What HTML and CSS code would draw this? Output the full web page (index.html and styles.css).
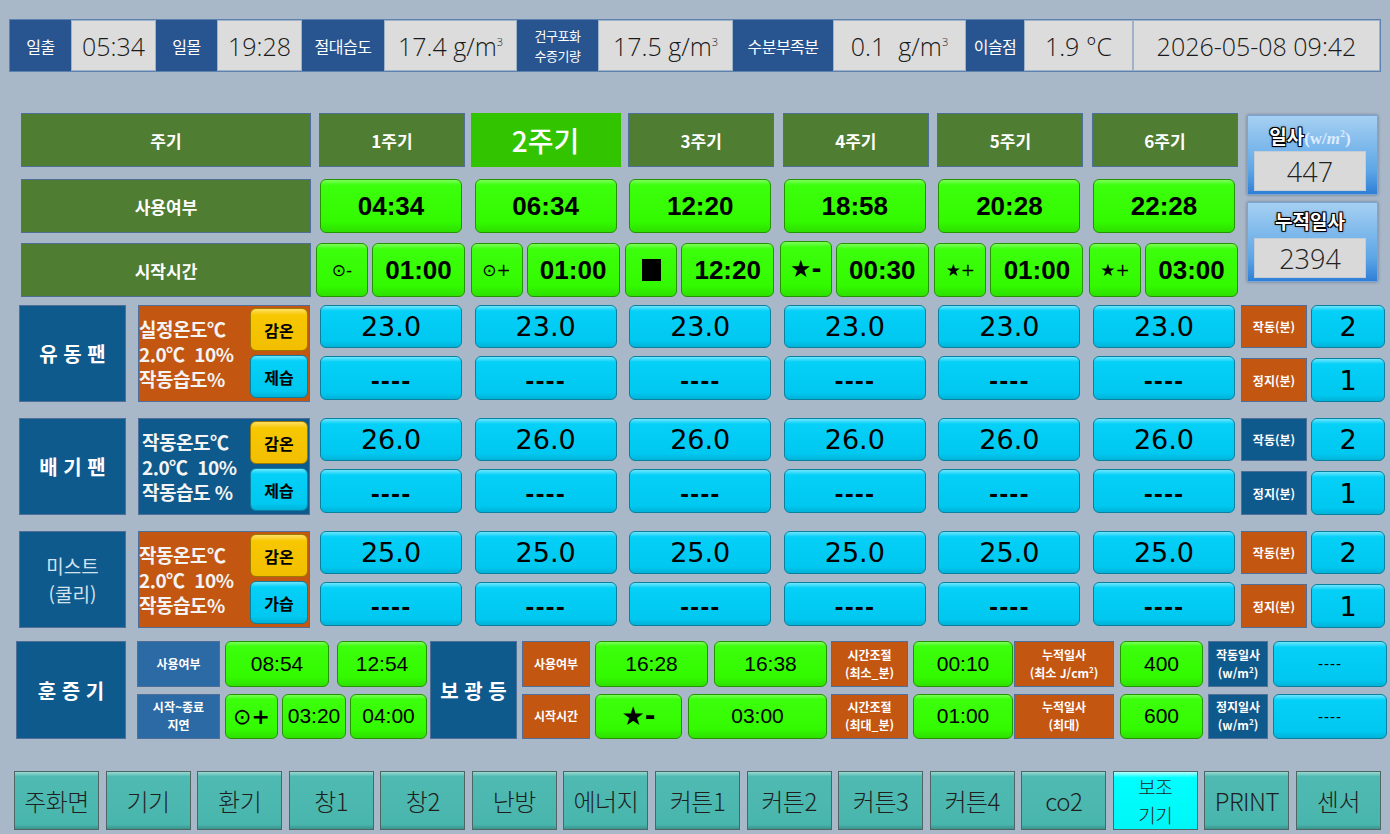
FILE: index.html
```html
<!DOCTYPE html>
<html lang="ko">
<head>
  <meta charset="UTF-8" />
  <title>보조기기</title>
  <link rel="stylesheet" href="styles.css">
</head>
<body>
  <div class="topbar">
    <div class="tlabel w61">일출</div>
    <div class="tval w85">05:34</div>
    <div class="tlabel w61">일몰</div>
    <div class="tval w85">19:28</div>
    <div class="tlabel w82">절대습도</div>
    <div class="tval w133"><span>17.4 g/m<sup>3</sup></span></div>
    <div class="tlabel w81 two"><span>건구포화<br>수증기량</span></div>
    <div class="tval w135"><span>17.5 g/m<sup>3</sup></span></div>
    <div class="tlabel w100">수분부족분</div>
    <div class="tval w133"><span>0.1&nbsp;&nbsp;g/m<sup>3</sup></span></div>
    <div class="tlabel w58">이슬점</div>
    <div class="tval w109">1.9 °C</div>
    <div class="tval grow">2026-05-08 09:42</div>
  </div>

  <div class="upper">
    <div class="cycles">
      <div class="crow">
        <div class="rlabel">주기</div>
        <div class="hcols">
          <div class="chead">1주기</div>
          <div class="chead on">2주기</div>
          <div class="chead">3주기</div>
          <div class="chead">4주기</div>
          <div class="chead">5주기</div>
          <div class="chead">6주기</div>
        </div>
      </div>
      <div class="crow r2">
        <div class="rlabel">사용여부</div>
        <div class="hcols">
          <div class="gbtn time">04:34</div>
          <div class="gbtn time">06:34</div>
          <div class="gbtn time">12:20</div>
          <div class="gbtn time">18:58</div>
          <div class="gbtn time">20:28</div>
          <div class="gbtn time">22:28</div>
        </div>
      </div>
      <div class="crow r3">
        <div class="rlabel">시작시간</div>
        <div class="hcols">
          <div class="pair"><div class="gbtn sym">⊙-</div><div class="gbtn time">01:00</div></div>
          <div class="pair"><div class="gbtn sym">⊙+</div><div class="gbtn time">01:00</div></div>
          <div class="pair"><div class="gbtn sym"><span class="sq"></span></div><div class="gbtn time">12:20</div></div>
          <div class="pair"><div class="gbtn sym star">★-</div><div class="gbtn time">00:30</div></div>
          <div class="pair"><div class="gbtn sym">★+</div><div class="gbtn time">01:00</div></div>
          <div class="pair"><div class="gbtn sym">★+</div><div class="gbtn time">03:00</div></div>
        </div>
      </div>
    </div>
    <div class="side">
      <div class="sunbox">
        <div class="sunhead">일사<span class="unit">(w/<i>m</i><sup>2</sup>)</span></div>
        <div class="sunval">447</div>
      </div>
      <div class="sunbox">
        <div class="sunhead">누적일사</div>
        <div class="sunval">2394</div>
      </div>
    </div>
  </div>

  <div class="fan first">
    <div class="dev">유 동 팬</div>
    <div class="setbox orange">
      <div class="settext">실정온도℃<br>2.0℃&nbsp;&nbsp;10%<br>작동습도%</div>
      <div class="setbtns"><div class="ybtn">감온</div><div class="cbtn mode">제습</div></div>
    </div>
    <div class="vals">
      <div class="cbtn val">23.0</div><div class="cbtn val">23.0</div><div class="cbtn val">23.0</div>
      <div class="cbtn val">23.0</div><div class="cbtn val">23.0</div><div class="cbtn val">23.0</div>
      <div class="cbtn dash">----</div><div class="cbtn dash">----</div><div class="cbtn dash">----</div>
      <div class="cbtn dash">----</div><div class="cbtn dash">----</div><div class="cbtn dash">----</div>
    </div>
    <div class="runstop">
      <div class="rslabel orange">작동(분)</div><div class="cbtn num">2</div>
      <div class="rslabel orange">정지(분)</div><div class="cbtn num">1</div>
    </div>
  </div>

  <div class="fan">
    <div class="dev">배 기 팬</div>
    <div class="setbox blue">
      <div class="settext">작동온도℃<br>2.0℃&nbsp;&nbsp;10%<br>작동습도 %</div>
      <div class="setbtns"><div class="ybtn">감온</div><div class="cbtn mode">제습</div></div>
    </div>
    <div class="vals">
      <div class="cbtn val">26.0</div><div class="cbtn val">26.0</div><div class="cbtn val">26.0</div>
      <div class="cbtn val">26.0</div><div class="cbtn val">26.0</div><div class="cbtn val">26.0</div>
      <div class="cbtn dash">----</div><div class="cbtn dash">----</div><div class="cbtn dash">----</div>
      <div class="cbtn dash">----</div><div class="cbtn dash">----</div><div class="cbtn dash">----</div>
    </div>
    <div class="runstop">
      <div class="rslabel blue">작동(분)</div><div class="cbtn num">2</div>
      <div class="rslabel blue">정지(분)</div><div class="cbtn num">1</div>
    </div>
  </div>

  <div class="fan">
    <div class="dev light">미스트<br>(쿨리)</div>
    <div class="setbox orange">
      <div class="settext">작동온도℃<br>2.0℃&nbsp;&nbsp;10%<br>작동습도%</div>
      <div class="setbtns"><div class="ybtn">감온</div><div class="cbtn mode">가습</div></div>
    </div>
    <div class="vals">
      <div class="cbtn val">25.0</div><div class="cbtn val">25.0</div><div class="cbtn val">25.0</div>
      <div class="cbtn val">25.0</div><div class="cbtn val">25.0</div><div class="cbtn val">25.0</div>
      <div class="cbtn dash">----</div><div class="cbtn dash">----</div><div class="cbtn dash">----</div>
      <div class="cbtn dash">----</div><div class="cbtn dash">----</div><div class="cbtn dash">----</div>
    </div>
    <div class="runstop">
      <div class="rslabel orange">작동(분)</div><div class="cbtn num">2</div>
      <div class="rslabel orange">정지(분)</div><div class="cbtn num">1</div>
    </div>
  </div>

  <div class="bottom">
    <div class="dev big">훈 증 기</div>
    <div class="bcol w83 ml11">
      <div class="blabel lblue"><span>사용여부</span></div>
      <div class="blabel lblue"><span>시작~종료<br>지연</span></div>
    </div>
    <div class="bcol w202 ml5">
      <div class="brow"><div class="gbtn thin w104">08:54</div><div class="gbtn thin grow">12:54</div></div>
      <div class="brow g4"><div class="gbtn thin w53 symb">⊙ <b>+</b></div><div class="gbtn thin w64">03:20</div><div class="gbtn thin grow">04:00</div></div>
    </div>
    <div class="dev mid ml3">보 광 등</div>
    <div class="bcol w68 ml5">
      <div class="blabel orange"><span>사용여부</span></div>
      <div class="blabel orange"><span>시작시간</span></div>
    </div>
    <div class="bcol w232 ml5">
      <div class="brow g6"><div class="gbtn thin grow">16:28</div><div class="gbtn thin grow">16:38</div></div>
      <div class="brow g6"><div class="gbtn thin w87 starb">★-</div><div class="gbtn thin grow">03:00</div></div>
    </div>
    <div class="bcol w77 ml4">
      <div class="blabel orange"><span>시간조절<br>(최소_분)</span></div>
      <div class="blabel orange"><span>시간조절<br>(최대_분)</span></div>
    </div>
    <div class="bcol w100 ml5">
      <div class="gbtn thin">00:10</div>
      <div class="gbtn thin">01:00</div>
    </div>
    <div class="bcol w100 ml1">
      <div class="blabel orange"><span>누적일사<br>(최소 J/cm<sup>2</sup>)</span></div>
      <div class="blabel orange"><span>누적일사<br>(최대)</span></div>
    </div>
    <div class="bcol w83 ml6">
      <div class="gbtn thin">400</div>
      <div class="gbtn thin">600</div>
    </div>
    <div class="bcol w60 ml5">
      <div class="blabel blue"><span>작동일사<br>(w/m<sup>2</sup>)</span></div>
      <div class="blabel blue"><span>정지일사<br>(w/m<sup>2</sup>)</span></div>
    </div>
    <div class="bcol w114 ml5">
      <div class="cbtn bdash">----</div>
      <div class="cbtn bdash">----</div>
    </div>
  </div>

  <div class="nav">
    <div class="navbtn">주화면</div>
    <div class="navbtn">기기</div>
    <div class="navbtn">환기</div>
    <div class="navbtn">창1</div>
    <div class="navbtn">창2</div>
    <div class="navbtn">난방</div>
    <div class="navbtn">에너지</div>
    <div class="navbtn">커튼1</div>
    <div class="navbtn">커튼2</div>
    <div class="navbtn">커튼3</div>
    <div class="navbtn">커튼4</div>
    <div class="navbtn">co2</div>
    <div class="navbtn active"><span>보조<br>기기</span></div>
    <div class="navbtn">PRINT</div>
    <div class="navbtn">센서</div>
  </div>
</body>
</html>
```

FILE: styles.css
```css
* {
  margin: 0;
  padding: 0;
  box-sizing: border-box;
}
body {
  width: 1390px;
  height: 834px;
  overflow: hidden;
  background: #a9b8c9;
  font-family: "Noto Sans CJK KR", "Noto Sans", sans-serif;
  color: #000;
}

/* top info bar */
.topbar {
  display: flex;
  margin: 19px 9px 0 9px;
  height: 53px;
  border: 1px solid #5e82b0;
  background: #28558f;
}
.tlabel {
  background: #28558f;
  color: #fff;
  font-size: 16px;
  display: flex;
  align-items: center;
  justify-content: center;
  letter-spacing: -0.5px;
}
.tlabel.two {
  font-size: 13px;
  line-height: 20px;
  text-align: center;
}
.tval {
  background: #dcdcdc;
  border: 1px solid #9fb3c8;
  font-family: "Open Sans", "Liberation Sans", sans-serif;
  font-weight: 300;
  font-size: 25px;
  color: #1a1a1a;
  display: flex;
  align-items: center;
  justify-content: center;
  white-space: nowrap;
}
.tval sup {
  font-size: 11px;
  vertical-align: 10px;
  line-height: 0;
}
.grow { flex: 1; }
.w53 { width: 53px; }
.w58 { width: 58px; }
.w60 { width: 60px; }
.w61 { width: 61px; }
.w64 { width: 64px; }
.w68 { width: 68px; }
.w77 { width: 77px; }
.w81 { width: 81px; }
.w82 { width: 82px; }
.w83 { width: 83px; }
.w85 { width: 85px; }
.w87 { width: 87px; }
.w100 { width: 100px; }
.w104 { width: 104px; }
.w109 { width: 109px; }
.w114 { width: 114px; }
.w133 { width: 133px; }
.w135 { width: 135px; }
.w202 { width: 202px; }
.w232 { width: 232px; }
.ml1 { margin-left: 1px; }
.ml3 { margin-left: 3px; }
.ml4 { margin-left: 4px; }
.ml5 { margin-left: 5px; }
.ml6 { margin-left: 6px; }
.ml11 { margin-left: 11px; }

/* cycle table */
.upper {
  display: flex;
  margin-top: 41px;
  margin-left: 21px;
}
.crow {
  display: flex;
  height: 54px;
}
.crow.r2 { margin-top: 12px; }
.crow.r3 { margin-top: 10px; }
.rlabel {
  width: 290px;
  background: #4f7d31;
  border: 1px solid #4f6f99;
  color: #fff;
  font-size: 17px;
  font-weight: bold;
  display: flex;
  align-items: center;
  justify-content: center;
}
.hcols {
  margin-left: 8px;
  display: grid;
  grid-template-columns: repeat(6, 146px);
  column-gap: 8.6px;
}
.chead {
  background: #4f7d31;
  border: 1px solid #4f6f99;
  color: #fff;
  font-size: 17px;
  font-weight: bold;
  display: flex;
  align-items: center;
  justify-content: center;
}
.chead.on {
  background: #33c400;
  border: none;
  margin: 0 -1px 0 -3px;
  font-size: 28px;
  font-weight: 500;
}

.gbtn {
  background: linear-gradient(#7dff5c 0, #3cff0c 10%, #33fa00 80%, #2ee000 100%);
  border: 1px solid #239300;
  border-radius: 6px;
  display: flex;
  align-items: center;
  justify-content: center;
}
.gbtn.time {
  font-family: "Liberation Sans Narrow", "Liberation Sans", sans-serif;
  font-weight: bold;
  font-size: 26px;
  height: 100%;
}
.r2 .gbtn { margin: 0 3px 0 1px; }
.pair {
  display: flex;
  gap: 4px;
  margin-left: -3px;
  height: 100%;
}
.pair .time { flex: 1; }
.gbtn.sym {
  width: 52px;
  font-family: "DejaVu Sans", sans-serif;
  font-size: 17px;
  height: 100%;
}
.gbtn.star {
  font-size: 24px;
  font-weight: bold;
  margin-top: -2px;
  height: calc(100% + 2px);
}
.sq {
  display: block;
  width: 19px;
  height: 22px;
  background: #000;
}

.side {
  margin-left: 9px;
  margin-top: 2px;
}
.sunbox {
  width: 131px;
  height: 80px;
  background: linear-gradient(#a6d0f2, #5da6e6 70%, #2f7fd6);
  border: 1px solid #7aa5d4;
  box-shadow: 0 0 3px rgba(40, 60, 90, 0.5);
  padding: 3px 11px 4px 6px;
  margin-bottom: 7px;
}
.sunhead {
  height: 32px;
  color: #fff;
  font-size: 19px;
  font-weight: bold;
  text-align: center;
  line-height: 30px;
  text-shadow: -1px -1px 0 #000, 1px -1px 0 #000, -1px 1px 0 #000, 1px 1px 0 #000, 0 0 3px #000;
  white-space: nowrap;
}
.sunhead .unit {
  font-family: "Liberation Serif", serif;
  font-weight: bold;
  font-size: 17px;
  color: #dcecff;
  text-shadow: none;
}
.sunhead sup { font-size: 10px; }
.sunval {
  height: 40px;
  background: #d9d9d9;
  border: 1px solid #c4cdd6;
  font-family: "Open Sans", "Liberation Sans", sans-serif;
  font-weight: 300;
  font-size: 27px;
  color: #222;
  display: flex;
  align-items: center;
  justify-content: center;
}

/* fan blocks */
.fan {
  display: flex;
  height: 97px;
  margin-left: 19px;
  margin-top: 16px;
}
.fan.first { margin-top: 8px; }
.dev {
  width: 107px;
  background: #0f5a8c;
  border: 1px solid #4f6f99;
  color: #fff;
  font-size: 20px;
  font-weight: bold;
  display: flex;
  align-items: center;
  justify-content: center;
  text-align: center;
  white-space: pre-line;
}
.dev.light {
  font-weight: normal;
  color: #d4e2ef;
  font-size: 19px;
  line-height: 28px;
}
.setbox {
  width: 172px;
  margin-left: 12px;
  border: 1px solid #4f6f99;
  display: flex;
  padding: 2px 1px 3px 0;
}
.orange { background: #c35611; }
.blue { background: #0f5a8c; }
.lblue { background: #2c6aa6; }
.settext {
  flex: 1;
  color: #f4f4f4;
  font-size: 19px;
  font-weight: bold;
  line-height: 25px;
  letter-spacing: -0.5px;
  padding-top: 8px;
  white-space: nowrap;
}
.setbox.blue .settext { padding-left: 3px; }
.setbtns {
  width: 58px;
  display: flex;
  flex-direction: column;
  gap: 4px;
}
.ybtn, .setbtns .cbtn {
  flex: 1;
  border-radius: 6px;
  font-size: 16px;
  font-weight: bold;
  display: flex;
  align-items: center;
  justify-content: center;
}
.ybtn {
  background: linear-gradient(#ffe066 0, #f7c700 15%, #f2bf00 100%);
  border: 1px solid #a07a00;
}
.cbtn {
  background: linear-gradient(#6fe6ff 0, #05d0f7 12%, #00c8f0 85%, #00b2d8 100%);
  border: 1px solid #0a7f9e;
  border-radius: 6px;
  display: flex;
  align-items: center;
  justify-content: center;
}
.vals {
  margin-left: 10px;
  display: grid;
  grid-template-columns: repeat(6, 142px);
  grid-template-rows: 43px 44px;
  column-gap: 12.6px;
  row-gap: 8px;
}
.cbtn.val, .cbtn.num {
  font-family: "DejaVu Sans", sans-serif;
  font-size: 27px;
}
.cbtn.dash {
  font-family: "DejaVu Sans", sans-serif;
  font-size: 22px;
  font-weight: bold;
  letter-spacing: 1px;
  padding-top: 6px;
}
.runstop {
  margin-left: 6px;
  display: grid;
  grid-template-columns: 66px 74px;
  grid-template-rows: 43px 44px;
  column-gap: 4px;
  row-gap: 10px;
}
.rslabel {
  border: 1px solid #4f6f99;
  color: #fff;
  font-size: 12px;
  font-weight: bold;
  display: flex;
  align-items: center;
  justify-content: center;
}

/* bottom section */
.bottom {
  display: flex;
  height: 98px;
  margin-left: 16px;
  margin-top: 13px;
}
.dev.big { width: 110px; }
.dev.mid { width: 87px; }
.bcol {
  display: flex;
  flex-direction: column;
  gap: 7px;
}
.bcol > * { flex: 1; }
.brow {
  display: flex;
  gap: 8px;
}
.brow.g4 { gap: 4px; }
.brow.g6 { gap: 6px; }
.blabel {
  border: 1px solid #4f6f99;
  color: #fff;
  font-size: 12px;
  font-weight: bold;
  line-height: 18px;
  text-align: center;
  display: flex;
  align-items: center;
  justify-content: center;
  white-space: nowrap;
}
.blabel sup {
  font-size: 8px;
  vertical-align: 5px;
  line-height: 0;
}
.gbtn.thin {
  font-family: "Liberation Sans", sans-serif;
  font-size: 21px;
}
.gbtn.symb {
  font-family: "DejaVu Sans", sans-serif;
  font-size: 22px;
}
.gbtn.starb {
  font-family: "DejaVu Sans", sans-serif;
  font-size: 26px;
  font-weight: bold;
}
.cbtn.bdash {
  font-family: "Liberation Sans", sans-serif;
  font-size: 15px;
  letter-spacing: 1px;
}

/* navigation */
.nav {
  display: flex;
  gap: 6.5px;
  margin: 32px 9px 0 14px;
  height: 59px;
}
.navbtn {
  flex: 1;
  background: linear-gradient(#9ad9d3 0, #4fbab1 8%, #49b6ad 92%, #3a948d 100%);
  border: 1px solid #4d6664;
  color: #1f1f1f;
  font-size: 24px;
  font-weight: 300;
  display: flex;
  align-items: center;
  justify-content: center;
  text-align: center;
  white-space: nowrap;
  letter-spacing: -0.5px;
}
.navbtn.active {
  background: linear-gradient(#b6ffff 0, #00ffff 10%, #00f6f6 100%);
  font-size: 19px;
  line-height: 28px;
}
```
